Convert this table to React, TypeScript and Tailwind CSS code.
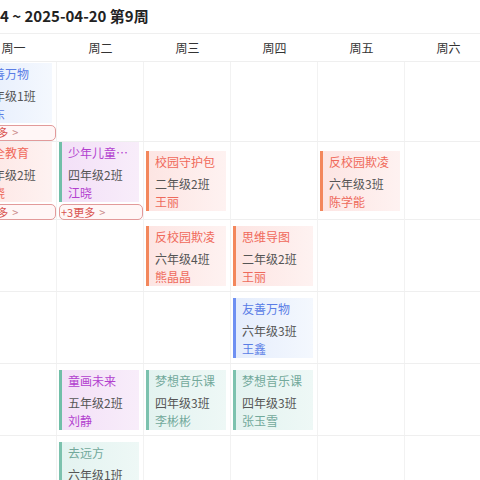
import React from "react";

type Variant = "blue" | "orange" | "purple" | "teal";
type Card = { v: Variant; title: string; cls: string; teacher: string };
type Cell = { cards: Card[]; more?: string };
type Row = { h: string; cells: Record<number, Cell> };

const V: Record<Variant, { card: string; title: string; teacher: string }> = {
  blue: {
    card: "border-[#6f90f2] from-[#e5edfc] to-[#f4f8fe]",
    title: "text-[#5a7de6]",
    teacher: "text-[#5a7de6]",
  },
  orange: {
    card: "border-[#f3875c] from-[#fde5e3] to-[#fef2f1]",
    title: "text-[#f0695a]",
    teacher: "text-[#ee6a5c]",
  },
  purple: {
    card: "border-[#71bfa8] from-[#f3e0f7] to-[#f8edfa]",
    title: "text-[#b23fcf]",
    teacher: "text-[#b23fcf]",
  },
  teal: {
    card: "border-[#7cc2ae] from-[#e3f3f0] to-[#eef8f6]",
    title: "text-[#72a99b]",
    teacher: "text-[#72a99b]",
  },
};

const days = ["周一", "周二", "周三", "周四", "周五", "周六", "周日"];

const rows: Row[] = [
  {
    h: "h-[80px]",
    cells: {
      0: {
        cards: [{ v: "blue", title: "友善万物", cls: "六年级1班", teacher: "李东" }],
        more: "+2更多",
      },
    },
  },
  {
    h: "h-[78px]",
    cells: {
      0: {
        cards: [{ v: "orange", title: "安全教育", cls: "三年级2班", teacher: "江晓" }],
        more: "+2更多",
      },
      1: {
        cards: [{ v: "purple", title: "少年儿童心理健康", cls: "四年级2班", teacher: "江晓" }],
        more: "+3更多",
      },
      2: { cards: [{ v: "orange", title: "校园守护包", cls: "二年级2班", teacher: "王丽" }] },
      4: { cards: [{ v: "orange", title: "反校园欺凌", cls: "六年级3班", teacher: "陈学能" }] },
    },
  },
  {
    h: "h-[72px]",
    cells: {
      2: { cards: [{ v: "orange", title: "反校园欺凌", cls: "六年级4班", teacher: "熊晶晶" }] },
      3: { cards: [{ v: "orange", title: "思维导图", cls: "二年级2班", teacher: "王丽" }] },
    },
  },
  {
    h: "h-[72px]",
    cells: {
      3: { cards: [{ v: "blue", title: "友善万物", cls: "六年级3班", teacher: "王鑫" }] },
    },
  },
  {
    h: "h-[72px]",
    cells: {
      1: { cards: [{ v: "purple", title: "童画未来", cls: "五年级2班", teacher: "刘静" }] },
      2: { cards: [{ v: "teal", title: "梦想音乐课", cls: "四年级3班", teacher: "李彬彬" }] },
      3: { cards: [{ v: "teal", title: "梦想音乐课", cls: "四年级3班", teacher: "张玉雪" }] },
    },
  },
  {
    h: "h-[72px]",
    cells: {
      1: { cards: [{ v: "teal", title: "去远方", cls: "六年级1班", teacher: "周敏" }] },
    },
  },
];

function CardView({ c }: { c: Card }) {
  const s = V[c.v];
  return (
    <div
      className={`ml-[2px] mr-[4px] flex h-[60px] shrink-0 flex-col border-l-[3px] bg-linear-to-r pl-[6px] pr-[4px] pt-[3px] ${s.card}`}
    >
      <div className={`truncate text-[12px] leading-4 ${s.title}`}>{c.title}</div>
      <div className="mt-[6px] text-[12px] leading-4 text-[#555]">{c.cls}</div>
      <div className={`mt-[2px] text-[12px] leading-4 ${s.teacher}`}>{c.teacher}</div>
    </div>
  );
}

export default function App() {
  return (
    <div
      className="h-[480px] w-[480px] overflow-hidden bg-white"
      style={{ fontFamily: '"Noto Sans CJK SC", "Noto Sans", sans-serif' }}
    >
      <div className="flex h-[33px] items-center pl-0 text-[15px] font-bold text-[#222]">
        4 ~ 2025-04-20 第9周
      </div>
      <div className="ml-[-30px] w-[609px]">
        <div className="grid h-[29px] grid-cols-[repeat(7,87px)] border-y border-[#efefef]">
          {days.map((d) => (
            <div key={d} className="flex items-center justify-center text-[12px] text-[#333]">
              {d}
            </div>
          ))}
        </div>
        {rows.map((r, ri) => (
          <div key={ri} className={`grid grid-cols-[repeat(7,87px)] border-b border-[#efefef] ${r.h}`}>
            {days.map((_, ci) => {
              const cell = r.cells[ci];
              return (
                <div
                  key={ci}
                  className="flex flex-col justify-center gap-[2px] border-r border-[#f2f2f2]"
                >
                  {cell?.cards.map((c, k) => <CardView key={k} c={c} />)}
                  {cell?.more && (
                    <div className="ml-[2px] flex h-[16px] shrink-0 items-center rounded-[5px] border border-[#e29a9a] bg-[#fff6f6] pl-[1px] text-[11px] leading-none text-[#d9534f]">
                      {cell.more}
                      <span className="ml-[4px] text-[#c98a8a]">&gt;</span>
                    </div>
                  )}
                </div>
              );
            })}
          </div>
        ))}
      </div>
    </div>
  );
}
